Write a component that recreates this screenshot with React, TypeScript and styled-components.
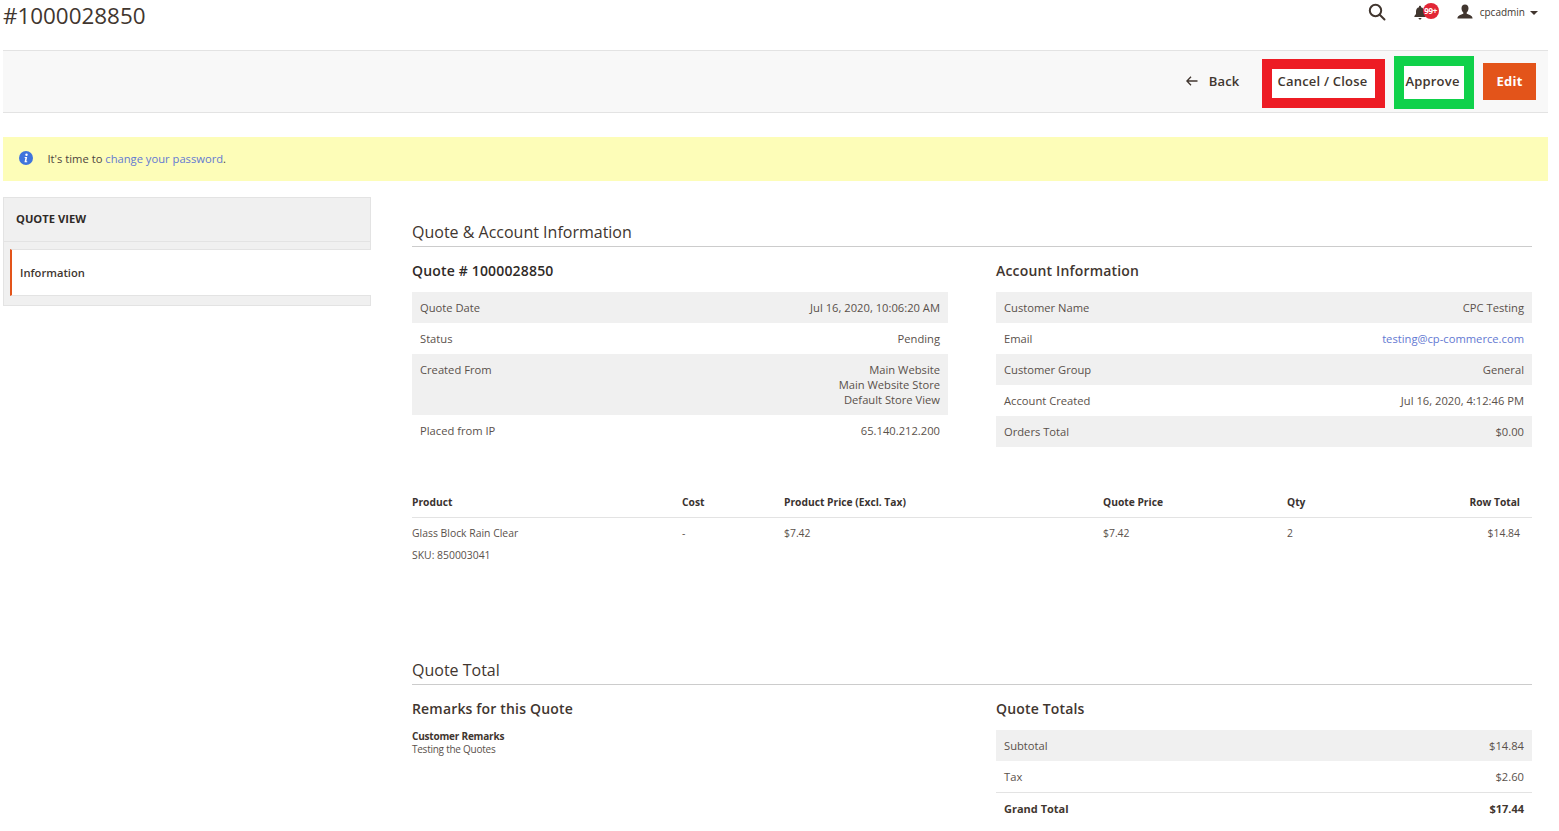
import React from "react";
import styled, { createGlobalStyle } from "styled-components";

const Global = createGlobalStyle`
  html, body { margin: 0; padding: 0; background: #fff; overflow: hidden; height: 831px; }
  body { font-family: "Open Sans", "Liberation Sans", sans-serif; color: #41362f; font-size: 12px; }
  * { box-sizing: border-box; }
`;

const Page = styled.div`
  width: 1545px;
  margin-left: 3px;
`;
const TopBar = styled.header`
  height: 50px;
  display: flex;
  justify-content: space-between;
  align-items: flex-start;
`;
const PageTitle = styled.h1`
  margin: 0;
  font-size: 22.4px;
  line-height: 32px;
  font-weight: 400;
  color: #41362f;
`;
const TopTools = styled.div`
  display: flex;
  align-items: center;
  height: 24px;
  padding-right: 10px;
`;
const SearchButton = styled.span`
  display: flex;
  margin-right: 28px;
`;
const BellWrap = styled.span`
  position: relative;
  display: flex;
  width: 12px;
  margin-right: 31px;
`;
const Badge = styled.span`
  position: absolute;
  left: 9px;
  top: -2px;
  width: 16px;
  height: 16px;
  border-radius: 50%;
  background: #e22636;
  color: #fff;
  font-size: 8px;
  font-weight: 700;
  line-height: 16px;
  text-align: center;
  letter-spacing: -0.3px;
`;
const UserName = styled.span`
  font-size: 10px;
  margin-left: 7px;
  color: #41362f;
`;
const Caret = styled.span`
  margin-left: 5px;
  margin-top: 2px;
  border-left: 4px solid transparent;
  border-right: 4px solid transparent;
  border-top: 4px solid #41362f;
`;
const ActionBar = styled.div`
  height: 63px;
  background: #f8f8f8;
  border-top: 1px solid #e3e3e3;
  border-bottom: 1px solid #e3e3e3;
  display: flex;
  align-items: center;
  justify-content: flex-end;
  padding-right: 12px;
`;
const BackLink = styled.span`
  display: flex;
  align-items: center;
  font-size: 13px;
  font-weight: 600;
  letter-spacing: 0.2px;
  padding-bottom: 2px;
  color: #41362f;
  margin-right: 22.5px;
`;
const BackIcon = styled.svg`
  margin-right: 10.5px;
  margin-top: 1px;
`;
const OutlineButton = styled.span<{ $color: string; $h: number; $w: number; $shift: number; $lift: number; $nudge: number }>`
  display: flex;
  align-items: center;
  justify-content: center;
  width: ${(p) => p.$w}px;
  height: ${(p) => p.$h}px;
  margin-top: ${(p) => p.$shift}px;
  padding-bottom: ${(p) => p.$lift}px;
  padding-right: ${(p) => p.$nudge}px;
  border: 10px solid ${(p) => p.$color};
  background: #fff;
  margin-right: 9px;
  font-size: 13px;
  font-weight: 600;
  letter-spacing: 0.2px;
  white-space: nowrap;
  color: #41362f;
`;
const EditButton = styled.span`
  display: flex;
  align-items: center;
  justify-content: center;
  width: 53px;
  height: 37px;
  padding-bottom: 2px;
  background: #e3541a;
  color: #fff;
  font-size: 13px;
  font-weight: 700;
  letter-spacing: 0.25px;
`;
const Notice = styled.div`
  height: 44px;
  margin-top: 24px;
  background: #fdfdb8;
  display: flex;
  align-items: center;
  padding-left: 16px;
  padding-bottom: 2px;
  font-size: 11.2px;
  color: #4d4540;
`;
const InfoIcon = styled.svg`
  margin-right: 14.5px;
`;
const Link = styled.span`
  color: #6379d2;
`;
const Columns = styled.div`
  display: flex;
  margin-top: 16px;
`;
const Sidebar = styled.aside`
  width: 368px;
  flex: none;
  height: 109px;
  background: #f0f0f0;
  border: 1px solid #e3e3e3;
`;
const SideTitle = styled.div`
  height: 44px;
  line-height: 41px;
  padding-left: 12px;
  font-size: 11.2px;
  font-weight: 700;
  color: #2f2a27;
  border-bottom: 1px solid #e3e3e3;
`;
const SideItem = styled.div`
  margin-top: 7px;
  margin-left: 6px;
  margin-right: -1px;
  height: 47px;
  background: #fff;
  border-left: 2px solid #e3541a;
  border-top: 1px solid #e3e3e3;
  border-bottom: 1px solid #e3e3e3;
  padding-left: 8px;
  line-height: 45px;
  font-size: 11.2px;
  font-weight: 600;
  color: #41362f;
`;
const Main = styled.main`
  width: 1120px;
  margin-left: 41px;
  padding-top: 24px;
`;
const SectionTitle = styled.h2`
  margin: 0;
  font-size: 16px;
  font-weight: 400;
  line-height: 22px;
  padding-bottom: 3px;
  border-bottom: 1px solid #ccc;
  color: #41362f;
`;
const TwoCols = styled.div`
  display: grid;
  grid-template-columns: 536px 536px;
  column-gap: 48px;
  margin-top: 14px;
`;
const BlockTitle = styled.h3<{ $dark?: boolean }>`
  margin: 0 0 11px;
  font-size: 14px;
  line-height: 20px;
  font-weight: 600;
  letter-spacing: 0.17px;
  color: ${(p) => (p.$dark ? "#2f2a27" : "#41362f")};
`;
const InfoRow = styled.div<{ $bold?: boolean; $line?: boolean }>`
  display: flex;
  justify-content: space-between;
  padding: 8px;
  font-size: ${(p) => (p.$bold ? "11px" : "11.2px")};
  line-height: 15px;
  font-weight: ${(p) => (p.$bold ? 700 : 400)};
  color: ${(p) => (p.$bold ? "#41362f" : "#5a514b")};
  border-top: ${(p) => (p.$line ? "1px solid #e3e3e3" : "none")};
  &:nth-child(odd) {
    background: ${(p) => (p.$line ? "#fff" : "#f0f0f0")};
  }
`;
const InfoList = styled.div``;
const Right = styled.div`
  text-align: right;
`;
const ProductGrid = styled.div`
  margin-top: 46px;
`;
const ProductRow = styled.div<{ $head?: boolean }>`
  display: grid;
  grid-template-columns: 270px 102px 319px 184px 1fr;
  padding-right: 12px;
  line-height: 22px;
  ${(p) =>
    p.$head
      ? `font-size: 10.25px; font-weight: 700; color: #3a3330; height: 25px; line-height: 18px; border-bottom: 1px solid #e3e3e3;`
      : `font-size: 10.4px; color: #5a514b; padding-top: 4px;`}
`;
const RowEnd = styled.div`
  display: flex;
  justify-content: space-between;
`;
const TotalSection = styled.div`
  margin-top: 93px;
`;
const RemarkHead = styled.div`
  font-size: 10px;
  line-height: 13px;
  font-weight: 700;
  letter-spacing: -0.2px;
  color: #41362f;
`;
const RemarkText = styled.div`
  font-size: 10px;
  line-height: 13px;
  letter-spacing: -0.25px;
  color: #5a514b;
`;

const info = [
  ["Quote Date", "Jul 16, 2020, 10:06:20 AM"],
  ["Status", "Pending"],
  ["Created From", "Main Website\nMain Website Store\nDefault Store View"],
  ["Placed from IP", "65.140.212.200"],
];
const account = [
  ["Customer Name", "CPC Testing"],
  ["Email", "testing@cp-commerce.com"],
  ["Customer Group", "General"],
  ["Account Created", "Jul 16, 2020, 4:12:46 PM"],
  ["Orders Total", "$0.00"],
];

export default function App() {
  return (
    <Page>
      <Global />
      <TopBar>
        <PageTitle>#1000028850</PageTitle>
        <TopTools>
          <SearchButton>
            <svg width="18" height="18" viewBox="0 0 18 18" fill="none" stroke="#41362f" strokeWidth="2">
              <circle cx="7.5" cy="7.5" r="5.7" />
              <path d="M11.7 11.7 L16.5 16.5" strokeLinecap="round" />
            </svg>
          </SearchButton>
          <BellWrap>
            <svg width="12" height="15" viewBox="0 0 12 15" fill="#41362f">
              <path d="M6 0.8c-.6 0-1 .4-1 1v.4C3 2.7 2 4.3 2 6.5v2.5L.4 11v1h11.2v-1L10 9V6.5C10 4.3 9 2.7 7 2.2v-.4c0-.6-.4-1-1-1z" />
              <path d="M4.5 13h3c0 .9-.7 1.5-1.500 1.500S4.500 13.900 4.500 13z" />
            </svg>
            <Badge>99+</Badge>
          </BellWrap>
          <svg width="16" height="16" viewBox="0 0 16 16" fill="#41362f">
            <path d="M8 .5c-2.2 0-3.500 1.700-3.500 3.800 0 1.800.8 3.300 1.800 4.200v1.300C5 10.600.6 11 .4 14.500h15.200C15.400 11 11 10.600 9.700 9.800V8.500c1-.9 1.800-2.400 1.800-4.200C11.500 2.200 10.200.5 8 .5z" />
          </svg>
          <UserName>cpcadmin</UserName>
          <Caret />
        </TopTools>
      </TopBar>

      <ActionBar>
        <BackLink>
          <BackIcon width="12" height="10" viewBox="0 0 12 10" fill="none" stroke="#41362f" strokeWidth="1.3">
            <path d="M11.5 5H1M5 .8 .9 5 5 9.2" />
          </BackIcon>
          Back
        </BackLink>
        <OutlineButton $color="#ed1c24" $w={123} $h={49} $shift={4} $lift={6} $nudge={2}>Cancel / Close</OutlineButton>
        <OutlineButton $color="#0fd14a" $w={80} $h={53} $shift={2} $lift={3} $nudge={3}>Approve</OutlineButton>
        <EditButton>Edit</EditButton>
      </ActionBar>

      <Notice>
        <InfoIcon width="14" height="14" viewBox="0 0 14 14">
          <circle cx="7" cy="7" r="7" fill="#3f74dc" />
          <circle cx="7.5" cy="3.7" r="1.2" fill="#fff" />
          <path d="M5.7 6h2.5l-.9 4.2h.9v1H5.5l.9-4.200h-.7z" fill="#fff" />
        </InfoIcon>
        <span>
          It's time to <Link>change your password</Link>.
        </span>
      </Notice>

      <Columns>
        <Sidebar>
          <SideTitle>QUOTE VIEW</SideTitle>
          <SideItem>Information</SideItem>
        </Sidebar>
        <Main>
          <SectionTitle>Quote &amp; Account Information</SectionTitle>
          <TwoCols>
            <div>
              <BlockTitle $dark>Quote # 1000028850</BlockTitle>
              <InfoList>
                {info.map(([k, v]) => (
                  <InfoRow key={k}>
                    <span>{k}</span>
                    <Right>
                      {v.split("\n").map((l) => (
                        <div key={l}>{l}</div>
                      ))}
                    </Right>
                  </InfoRow>
                ))}
              </InfoList>
            </div>
            <div>
              <BlockTitle>Account Information</BlockTitle>
              <InfoList>
                {account.map(([k, v]) => (
                  <InfoRow key={k}>
                    <span>{k}</span>
                    {k === "Email" ? <Link>{v}</Link> : <span>{v}</span>}
                  </InfoRow>
                ))}
              </InfoList>
            </div>
          </TwoCols>

          <ProductGrid>
            <ProductRow $head>
              <span>Product</span>
              <span>Cost</span>
              <span>Product Price (Excl. Tax)</span>
              <span>Quote Price</span>
              <RowEnd>
                <span>Qty</span>
                <span>Row Total</span>
              </RowEnd>
            </ProductRow>
            <ProductRow>
              <div>
                <div>Glass Block Rain Clear</div>
                <div>SKU: 850003041</div>
              </div>
              <span>-</span>
              <span>$7.42</span>
              <span>$7.42</span>
              <RowEnd>
                <span>2</span>
                <span>$14.84</span>
              </RowEnd>
            </ProductRow>
          </ProductGrid>

          <TotalSection>
            <SectionTitle>Quote Total</SectionTitle>
            <TwoCols>
              <div>
                <BlockTitle>Remarks for this Quote</BlockTitle>
                <RemarkHead>Customer Remarks</RemarkHead>
                <RemarkText>Testing the Quotes</RemarkText>
              </div>
              <div>
                <BlockTitle>Quote Totals</BlockTitle>
                <InfoList>
                  <InfoRow>
                    <span>Subtotal</span>
                    <span>$14.84</span>
                  </InfoRow>
                  <InfoRow>
                    <span>Tax</span>
                    <span>$2.60</span>
                  </InfoRow>
                  <InfoRow $bold $line>
                    <span>Grand Total</span>
                    <span>$17.44</span>
                  </InfoRow>
                </InfoList>
              </div>
            </TwoCols>
          </TotalSection>
        </Main>
      </Columns>
    </Page>
  );
}
